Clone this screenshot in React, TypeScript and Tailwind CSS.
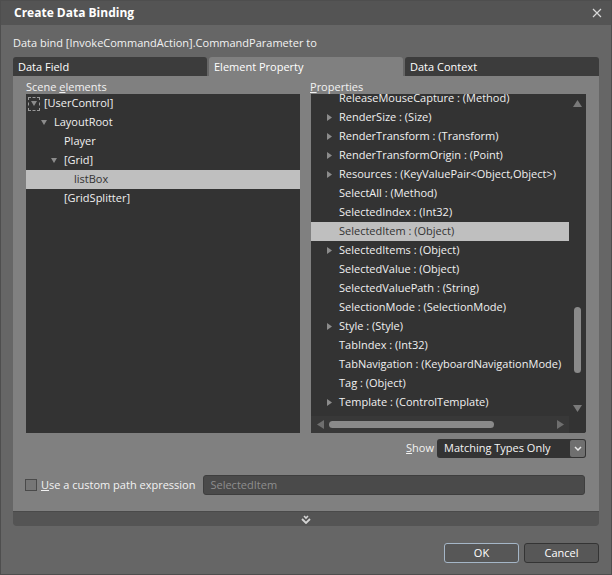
import React from "react"

type Caret = "none" | "down" | "focus"

const sceneRows: { label: string; indent: string; caret: Caret; selected?: boolean }[] = [
  { label: "[UserControl]", indent: "pl-[2px]", caret: "focus" },
  { label: "LayoutRoot", indent: "pl-[12px]", caret: "down" },
  { label: "Player", indent: "pl-[22px]", caret: "none" },
  { label: "[Grid]", indent: "pl-[22px]", caret: "down" },
  { label: "listBox", indent: "pl-[32px]", caret: "none", selected: true },
  { label: "[GridSplitter]", indent: "pl-[22px]", caret: "none" },
]

const props: { label: string; expand?: boolean; selected?: boolean }[] = [
  { label: "ReleaseMouseCapture : (Method)" },
  { label: "RenderSize : (Size)", expand: true },
  { label: "RenderTransform : (Transform)", expand: true },
  { label: "RenderTransformOrigin : (Point)", expand: true },
  { label: "Resources : (KeyValuePair<Object,Object>)", expand: true },
  { label: "SelectAll : (Method)" },
  { label: "SelectedIndex : (Int32)" },
  { label: "SelectedItem : (Object)", selected: true },
  { label: "SelectedItems : (Object)", expand: true },
  { label: "SelectedValue : (Object)" },
  { label: "SelectedValuePath : (String)" },
  { label: "SelectionMode : (SelectionMode)" },
  { label: "Style : (Style)", expand: true },
  { label: "TabIndex : (Int32)" },
  { label: "TabNavigation : (KeyboardNavigationMode)" },
  { label: "Tag : (Object)" },
  { label: "Template : (ControlTemplate)", expand: true },
]

function DownTri() {
  return (
    <svg width="6" height="5" viewBox="0 0 6 5">
      <polygon points="0,0 6,0 3,5" fill="#8c8c8c" />
    </svg>
  )
}

function RightTri() {
  return (
    <svg width="5" height="7" viewBox="0 0 5 7">
      <polygon points="0,0 5,3.5 0,7" fill="#8c8c8c" />
    </svg>
  )
}

function SceneList() {
  return (
    <div className="w-[274px] h-[339px] bg-[#333333]">
      {sceneRows.map((row) => (
        <div
          key={row.label}
          className={`h-[19px] flex items-center gap-[4px] ${row.indent} ${
            row.selected ? "bg-[#bfbfbf] text-[#333]" : "text-[#f0f0f0]"
          }`}
        >
          <div className="w-[12px] h-[14px] flex items-center justify-center">
            {row.caret === "focus" && (
              <div className="w-[12px] h-[14px] border border-dashed border-[#999] flex items-center justify-center">
                <DownTri />
              </div>
            )}
            {row.caret === "down" && <DownTri />}
          </div>
          <span>{row.label}</span>
        </div>
      ))}
    </div>
  )
}

function PropertyList() {
  return (
    <div className="w-[275px] h-[339px] bg-[#333333] flex flex-col rounded-br-[3px] overflow-hidden">
      <div className="flex h-[322px]">
        <div className="flex-1 overflow-hidden">
          <div className="-mt-[5px]">
            {props.map((p) => (
              <div
                key={p.label}
                className={`h-[19px] flex items-center gap-[6px] pl-[16px] whitespace-nowrap ${
                  p.selected ? "bg-[#bfbfbf] text-[#333]" : "text-[#f0f0f0]"
                }`}
              >
                <div className="w-[6px] flex items-center">{p.expand && <RightTri />}</div>
                <span>{p.label}</span>
              </div>
            ))}
          </div>
        </div>
        {/* vertical scrollbar */}
        <div className="w-[17px] flex flex-col items-center">
          <div className="h-[16px] flex items-center justify-center mt-[1px]">
            <svg width="9" height="7" viewBox="0 0 9 7">
              <polygon points="0,7 9,7 4.5,0" fill="#7a7a7a" />
            </svg>
          </div>
          <div className="flex-1 w-full flex flex-col items-center">
            <div className="mt-[196px] w-[7px] h-[66px] rounded-full bg-[#8a8a8a]" />
          </div>
          <div className="h-[16px] flex items-center justify-center">
            <svg width="9" height="7" viewBox="0 0 9 7">
              <polygon points="0,0 9,0 4.5,7" fill="#7a7a7a" />
            </svg>
          </div>
        </div>
      </div>
      {/* horizontal scrollbar */}
      <div className="h-[17px] flex bg-[#383838]">
        <div className="flex-1 flex items-center">
          <div className="w-[18px] flex justify-center">
            <svg width="7" height="9" viewBox="0 0 7 9">
              <polygon points="7,0 7,9 0,4.5" fill="#6e6e6e" />
            </svg>
          </div>
          <div className="w-[165px] h-[7px] rounded-full bg-[#8a8a8a]" />
          <div className="flex-1" />
          <div className="w-[18px] flex justify-center">
            <svg width="7" height="9" viewBox="0 0 7 9">
              <polygon points="0,0 0,9 7,4.5" fill="#6e6e6e" />
            </svg>
          </div>
        </div>
        <div className="w-[17px] bg-[#333333]" />
      </div>
    </div>
  )
}

export default function App() {
  return (
    <div className="w-[612px] h-[575px] bg-[#666666] border border-[#4e4e4e] font-['Open_Sans',sans-serif] text-[11px] text-[#f2f2f2] flex flex-col">
      {/* title bar */}
      <div className="h-[24px] bg-[#545454] flex items-center justify-between pl-[13px] pr-[9px]">
        <span className="text-[12px] font-bold text-white">Create Data Binding</span>
        <svg width="10" height="10" viewBox="0 0 10 10">
          <path d="M1 1 L9 9 M9 1 L1 9" stroke="#d8d8d8" strokeWidth="1.2" />
        </svg>
      </div>

      <div className="flex flex-col px-[12px]">
        <div className="h-[18px] mt-[9px] leading-[18px]">Data bind [InvokeCommandAction].CommandParameter to</div>

        {/* tabs */}
        <div className="mt-[5px] grid grid-cols-3 gap-[2px] h-[19px]">
          <div className="bg-[#3c3c3c] rounded-t-[3px] pl-[5px] leading-[19px] text-white">Data Field</div>
          <div className="bg-[#808080] rounded-t-[3px] pl-[5px] leading-[19px] text-white">Element Property</div>
          <div className="bg-[#3c3c3c] rounded-t-[3px] pl-[5px] leading-[19px] text-white">Data Context</div>
        </div>

        {/* panel */}
        <div className="bg-[#808080] flex flex-col rounded-b-[3px]">
          <div className="px-[13px] pt-[4px] flex gap-[11px]">
            <div className="flex flex-col">
              <div className="h-[14px] leading-[14px] text-[#f2f2f2]">
                Scene <span className="underline">e</span>lements
              </div>
              <SceneList />
            </div>
            <div className="flex flex-col">
              <div className="h-[14px] leading-[14px] -ml-[1px] text-[#f2f2f2]">
                <span className="underline">P</span>roperties
              </div>
              <PropertyList />
            </div>
          </div>

          {/* show row */}
          <div className="mt-[6px] pr-[13px] flex justify-end items-center gap-[3px] h-[19px]">
            <span className="text-[#f2f2f2]">
              <span className="underline">S</span>how
            </span>
            <div className="w-[149px] h-[19px] bg-[#333333] rounded-[3px] flex items-center justify-between pl-[7px] pr-[1px]">
              <span className="text-[#f4f4f4]">Matching Types Only</span>
              <div className="w-[15px] h-[17px] bg-[#6f6f6f] rounded-[2px] flex items-center justify-center">
                <svg width="8" height="5" viewBox="0 0 8 5">
                  <path d="M1 1 L4 4 L7 1" stroke="#e8e8e8" strokeWidth="1.5" fill="none" />
                </svg>
              </div>
            </div>
          </div>

          {/* custom path row */}
          <div className="mt-[17px] h-[20px] pl-[12px] pr-[14px] flex items-center">
            <div className="w-[12px] h-[12px] border border-[#4a4a4a] bg-[#767676]" />
            <span className="ml-[4px] text-[#f2f2f2]">
              <span className="underline">U</span>se a custom path expression
            </span>
            <div className="ml-[8px] flex-1 h-[20px] bg-[#4a4a4a] border border-[#3e3e3e] rounded-[3px] pl-[6px] leading-[18px] text-[#8e8e8e]">
              SelectedItem
            </div>
          </div>

          {/* expander */}
          <div className="mt-[16px] h-[15px] bg-[#545454] border-t border-[#4a4a4a] rounded-b-[3px] flex items-center justify-center">
            <svg width="12" height="9" viewBox="0 0 12 9">
              <path d="M4 1 L6 3 L8 1" stroke="#d4d4d4" strokeWidth="1.6" fill="none" />
              <path d="M2 4 L6 8 L10 4" stroke="#d4d4d4" strokeWidth="1.8" fill="none" />
            </svg>
          </div>
        </div>

        {/* buttons */}
        <div className="mt-[17px] flex justify-end gap-[5px]">
          <button className="w-[75px] h-[20px] bg-[#575757] border border-[#a5b6c7] rounded-[3px] text-white text-[11px] leading-[18px]">
            OK
          </button>
          <button className="w-[75px] h-[20px] bg-[#575757] border border-[#343434] rounded-[3px] text-white text-[11px] leading-[18px]">
            Cancel
          </button>
        </div>
      </div>
    </div>
  )
}
